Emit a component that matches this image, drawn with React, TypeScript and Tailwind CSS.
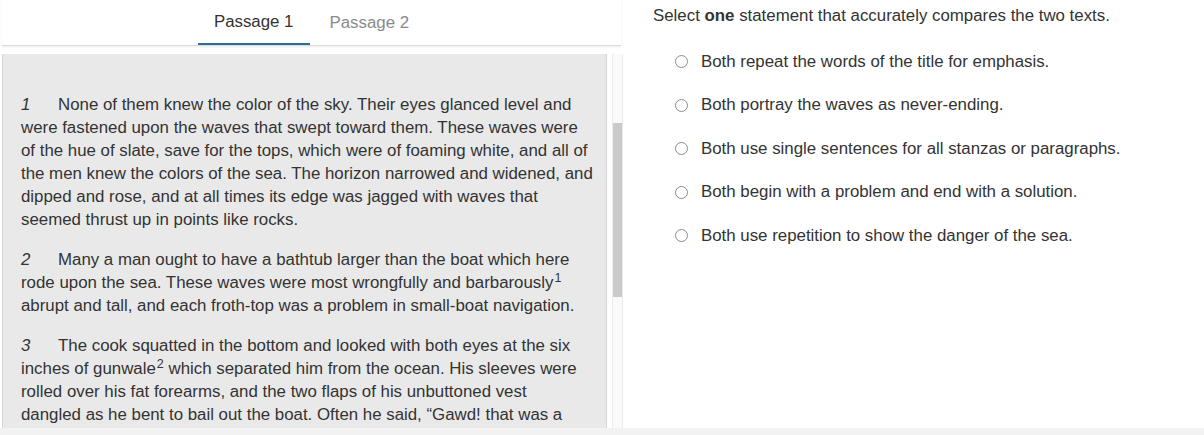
import React from "react";

const options = [
  "Both repeat the words of the title for emphasis.",
  "Both portray the waves as never-ending.",
  "Both use single sentences for all stanzas or paragraphs.",
  "Both begin with a problem and end with a solution.",
  "Both use repetition to show the danger of the sea.",
];

const Sup = ({ n }: { n: number }) => <sup className="text-[12.5px] ml-[1px]">{n}</sup>;

function Para({ n, lines }: { n: number; lines: React.ReactNode[] }) {
  return (
    <div className="mb-[17px] leading-[23px]">
      {lines.map((l, i) => (
        <div key={i} className="whitespace-nowrap">
          {i === 0 && <span className="inline-block w-[37px] italic">{n}</span>}
          {l}
        </div>
      ))}
    </div>
  );
}

export default function App() {
  return (
    <div
      className="w-[1204px] h-[435px] bg-white text-[#333] text-[16.85px] overflow-hidden flex flex-col"
      style={{ fontFamily: '"Liberation Sans", Arial, sans-serif' }}
    >
      <div className="flex h-[428px]">
        {/* passages */}
        <div className="w-[623px] flex flex-col pl-[2px]">
          <div className="h-[46px] flex justify-center gap-[4px] border-b border-[#dcdcdc] shadow-[0_1px_2px_rgba(0,0,0,0.08)] mr-[2px]">
            <button className="px-4 h-[45px] pt-[1px] text-[#333] border-b-2 border-[#2a6f97] -mb-[1px]">
              Passage 1
            </button>
            <button className="px-4 h-[44px] pt-[1px] text-[#8a8a8a]">Passage 2</button>
          </div>
          <div className="flex flex-1 min-h-0 mt-[8px]">
            <div className="w-[605px] bg-[#e9e9e9] border-l border-r border-[#d6d6d6] pl-[18px] pr-[10px] pt-[39px] overflow-hidden">
              <Para
                n={1}
                lines={[
                  "None of them knew the color of the sky. Their eyes glanced level and",
                  "were fastened upon the waves that swept toward them. These waves were",
                  "of the hue of slate, save for the tops, which were of foaming white, and all of",
                  "the men knew the colors of the sea. The horizon narrowed and widened, and",
                  "dipped and rose, and at all times its edge was jagged with waves that",
                  "seemed thrust up in points like rocks.",
                ]}
              />
              <Para
                n={2}
                lines={[
                  "Many a man ought to have a bathtub larger than the boat which here",
                  <>
                    rode upon the sea. These waves were most wrongfully and barbarously
                    <Sup n={1} />
                  </>,
                  "abrupt and tall, and each froth-top was a problem in small-boat navigation.",
                ]}
              />
              <Para
                n={3}
                lines={[
                  "The cook squatted in the bottom and looked with both eyes at the six",
                  <>
                    inches of gunwale
                    <Sup n={2} /> which separated him from the ocean. His sleeves were
                  </>,
                  "rolled over his fat forearms, and the two flaps of his unbuttoned vest",
                  "dangled as he bent to bail out the boat. Often he said, “Gawd! that was a",
                  <>
                    narrow clip.” As he remarked it he invariably
                    <Sup n={3} /> gazed eastward over the broken
                  </>,
                ]}
              />
            </div>
            <div className="ml-[5px] w-[11px] border-l border-r border-[#ececec] bg-[#fafafa] flex flex-col">
              <div className="h-[69px]" />
              <div className="h-[174px] bg-[#cacaca]" />
            </div>
          </div>
        </div>

        {/* question */}
        <div className="flex-1 pl-[30px] pt-[6px]">
          <p className="leading-[20px] whitespace-nowrap">
            Select <b>one</b> statement that accurately compares the two texts.
          </p>
          <div className="mt-[14px] pl-[22px] flex flex-col">
            {options.map((o) => (
              <label key={o} className="h-[43.5px] flex items-center gap-[13px] -mt-[6px] mb-[6px] first:mt-0">
                <span className="w-[13px] h-[13px] rounded-full border border-[#8c8c8c] bg-white shrink-0" />
                <span className="leading-[20px] whitespace-nowrap">{o}</span>
              </label>
            ))}
          </div>
        </div>
      </div>
      <div className="h-[7px] bg-[#f2f2f2]" />
    </div>
  );
}
